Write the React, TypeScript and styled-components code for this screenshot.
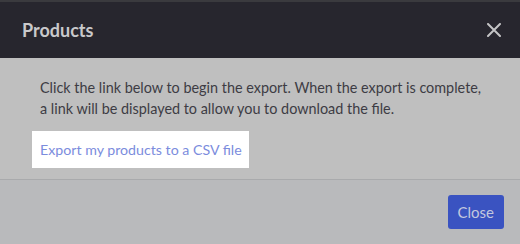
import React from 'react';
import styled, { createGlobalStyle } from 'styled-components';

const GlobalStyle = createGlobalStyle`
  html, body {
    margin: 0;
    padding: 0;
    background: #bfbfbf;
  }
  body {
    font-family: Lato, 'Open Sans', sans-serif;
  }
`;

const Modal = styled.div`
  width: 520px;
  height: 244px;
  display: flex;
  flex-direction: column;
  background: #bfbfbf;
  overflow: hidden;
`;

const Header = styled.header`
  flex-shrink: 0;
  height: 58px;
  box-sizing: border-box;
  padding: 0 16px 0 22px;
  display: flex;
  align-items: center;
  justify-content: space-between;
  background: #27262e;
  border-top: 2px solid #3a3a3e;
`;

const Title = styled.h2`
  margin: 0;
  font-size: 18px;
  font-weight: 700;
  color: #c9c9cb;
`;

const CloseIcon = styled.button`
  width: 20px;
  height: 20px;
  padding: 0;
  border: 0;
  background: none;
  display: flex;
  align-items: center;
  justify-content: center;
  cursor: pointer;
`;

const Body = styled.section`
  flex-shrink: 0;
  height: 122px;
  box-sizing: border-box;
  padding: 19px 40px 0 40px;
  border-bottom: 1px solid #a9aaac;
`;

const Message = styled.p`
  margin: 0 0 12px;
  font-size: 14.4px;
  line-height: 21px;
  color: #3d3c44;
  white-space: nowrap;
`;

const Highlight = styled.div`
  display: inline-block;
  margin-left: -8px;
  padding: 8px 7px 8px 8px;
  background: #ffffff;
`;

const ExportLink = styled.a`
  font-size: 14.2px;
  line-height: 21px;
  color: #7b8cdd;
  text-decoration: none;
`;

const Footer = styled.footer`
  flex: 1;
  box-sizing: border-box;
  padding: 15px 16px 0;
  display: flex;
  justify-content: flex-end;
  align-items: flex-start;
  background: #b9babc;
`;

const Button = styled.button<{ $tone?: 'primary' }>`
  height: 34px;
  padding: 0 10px;
  border: 0;
  border-radius: 3px;
  background: ${p => (p.$tone === 'primary' ? '#3a53c1' : '#d0d0d0')};
  color: #c3c8de;
  font-family: Lato, 'Open Sans', sans-serif;
  font-size: 15px;
  cursor: pointer;
`;

export default function App() {
  return (
    <>
      <GlobalStyle />
      <Modal>
        <Header>
          <Title>Products</Title>
          <CloseIcon aria-label="Close">
            <svg width="14" height="14" viewBox="0 0 14 14">
              <path d="M1 1 L13 13 M13 1 L1 13" stroke="#c4c4c6" strokeWidth="2" strokeLinecap="round" />
            </svg>
          </CloseIcon>
        </Header>
        <Body>
          <Message>
            Click the link below to begin the export. When the export is complete,
            <br />a link will be displayed to allow you to download the file.
          </Message>
          <Highlight>
            <ExportLink href="#">Export my products to a CSV file</ExportLink>
          </Highlight>
        </Body>
        <Footer>
          <Button $tone="primary">Close</Button>
        </Footer>
      </Modal>
    </>
  );
}
